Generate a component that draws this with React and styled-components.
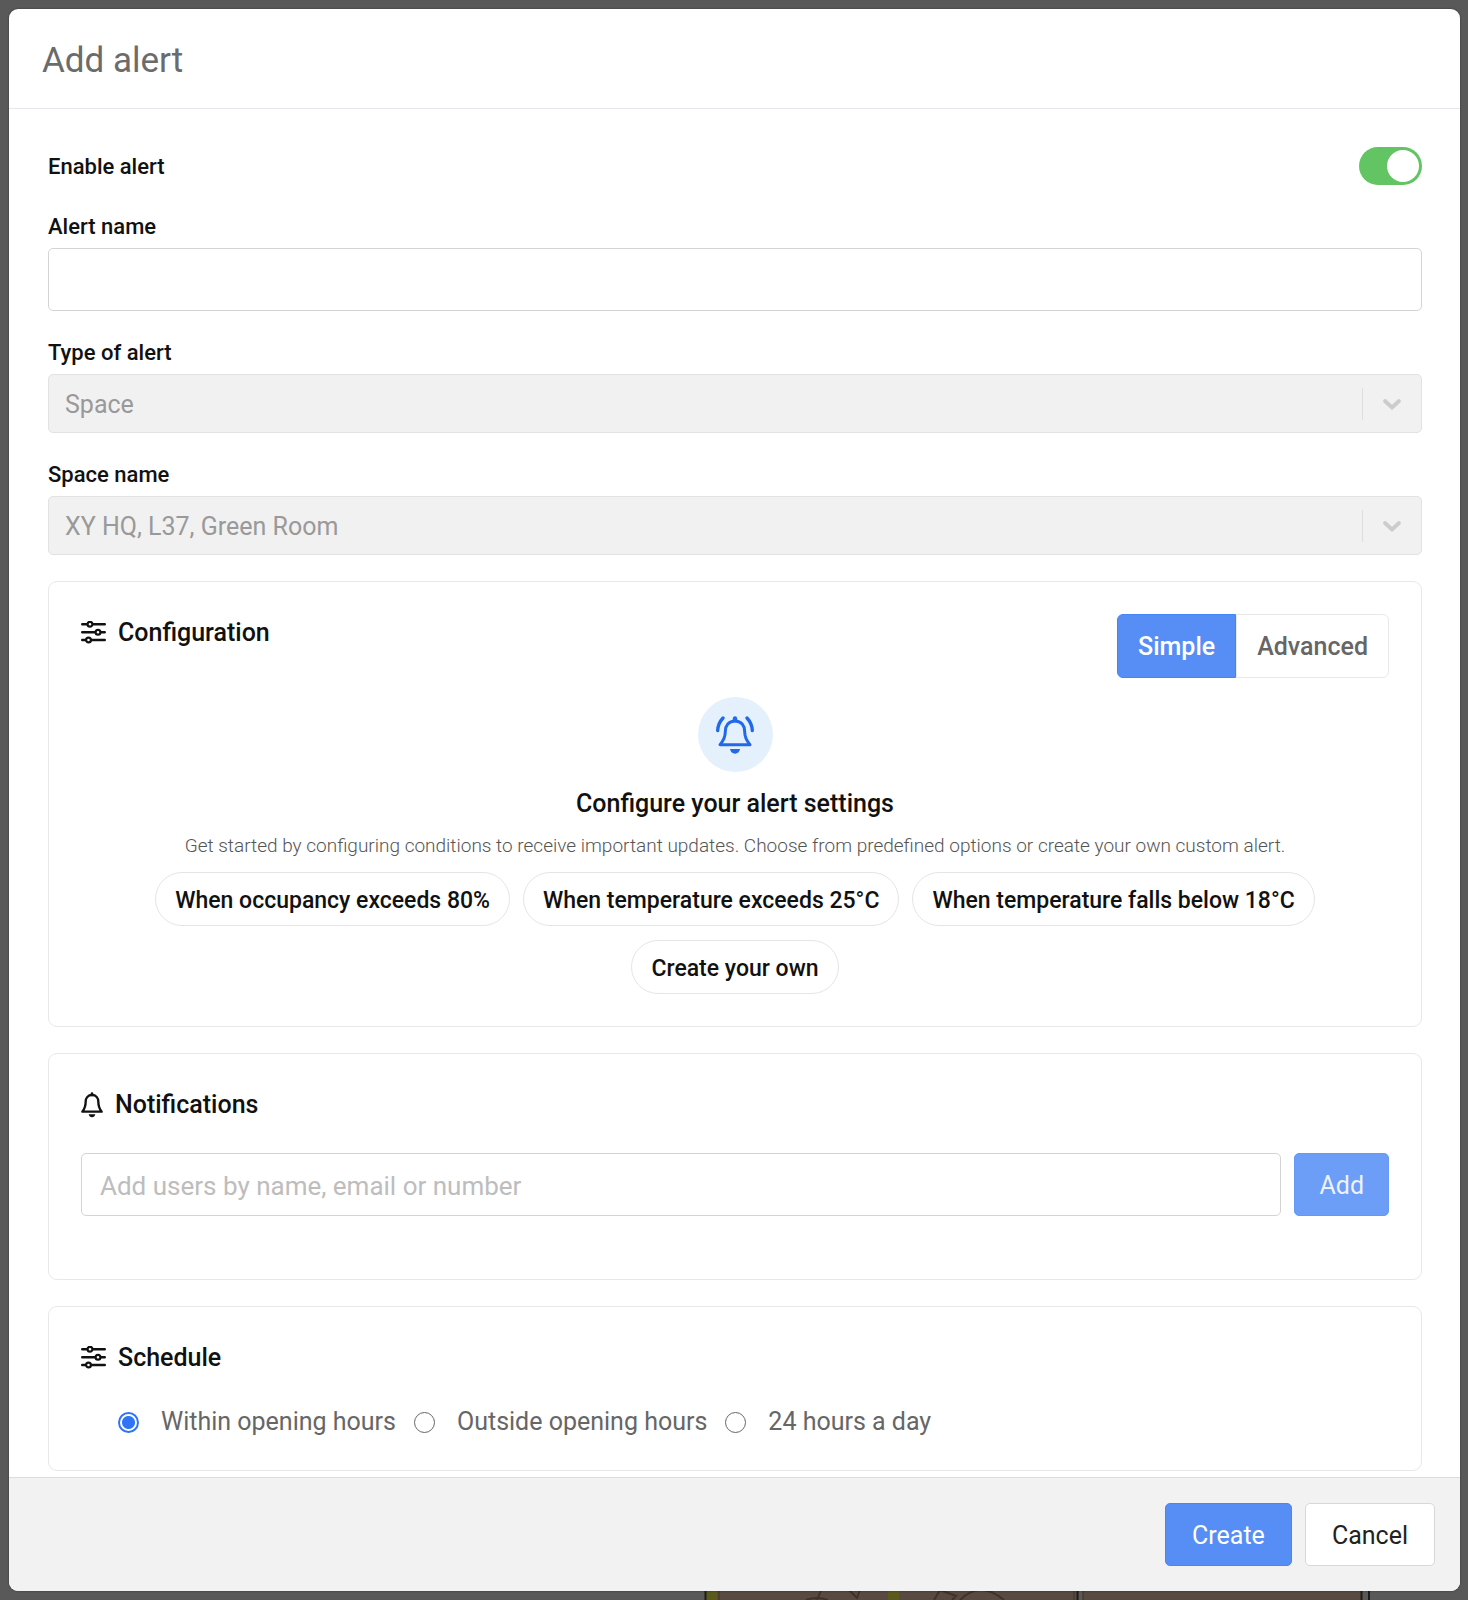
import React, { useState } from 'react';
import styled, { createGlobalStyle } from 'styled-components';

const GlobalStyle = createGlobalStyle`
  * {
    box-sizing: border-box;
  }

  body {
    margin: 0;
    background: #595959;
    font-family: Roboto, 'Liberation Sans', sans-serif;
    color: #111;
  }

  button,
  input,
  select {
    margin: 0;
    font-family: inherit;
  }
`;

const StyledBackdrop = styled.div`
  position: relative;
  display: flex;
  min-height: 100vh;
  padding: 9px 8px 9px 9px;
  background: #595959;
`;

const StyledFloorPlan = styled.svg`
  position: absolute;
  right: 96px;
  bottom: 0;
  width: 668px;
  height: 12px;
`;

const StyledDialog = styled.form`
  position: relative;
  display: flex;
  flex: 1;
  flex-direction: column;
  min-width: 0;
  overflow: hidden;
  border-radius: 9px;
  background: #fff;
  box-shadow: 0 0 2px rgba(0, 0, 0, 0.5);
`;

const StyledHeader = styled.header`
  display: flex;
  align-items: center;
  height: 100px;
  padding: 3px 33px 0;
  border-bottom: 1px solid #e4e7eb;

  h1 {
    margin: 0;
    font-size: 35px;
    font-weight: 400;
    color: #6b6b6b;
  }
`;

const StyledBody = styled.div`
  display: flex;
  flex-direction: column;
  gap: 26px;
  padding: 38px 38px 5px 39px;
`;

const StyledToggleRow = styled.div`
  display: flex;
  align-items: center;
  justify-content: space-between;
`;

const StyledField = styled.div`
  display: flex;
  flex-direction: column;
  gap: 6px;
`;

const StyledLabel = styled.label`
  font-size: 22px;
  font-weight: 500;
  line-height: 31px;
`;

const StyledToggle = styled.input`
  display: flex;
  width: 63px;
  height: 38px;
  padding: 3px;
  appearance: none;
  border-radius: 19px;
  background: #ccc;
  cursor: pointer;

  &:before {
    content: '';
    width: 32px;
    height: 32px;
    border-radius: 50%;
    background: #fff;
  }

  &:checked {
    justify-content: flex-end;
    background: #62c462;
  }
`;

const StyledInput = styled.input`
  width: 100%;
  min-width: 0;
  height: 63px;
  padding: 2px 18px 0;
  border: 1px solid #d4d4d4;
  border-radius: 5px;
  background: #fff;
  font-size: 26px;

  &::placeholder {
    color: #bdbdbd;
  }
`;

const StyledSelect = styled.div`
  display: flex;
  align-items: center;
  height: 59px;
  border: 1px solid #e2e2e2;
  border-radius: 5px;
  background: #f1f1f1;

  select {
    flex: 1;
    height: 100%;
    padding: 2px 16px 0;
    appearance: none;
    border: 0;
    background: transparent;
    color: #999;
    font-size: 25px;
    opacity: 1;
  }
`;

const StyledIndicator = styled.span`
  display: flex;
  align-items: center;
  justify-content: center;
  width: 59px;
  height: 32px;
  border-left: 1px solid #dedede;
`;

const StyledCard = styled.section`
  padding: 32px;
  padding-bottom: ${({ $roomy }) => ($roomy ? '63px' : '32px')};
  border: 1px solid #e7e9e9;
  border-radius: 9px;
`;

const StyledCardHeader = styled.div`
  display: flex;
  align-items: flex-start;
  justify-content: space-between;
`;

const StyledCardTitle = styled.h2`
  display: flex;
  align-items: center;
  gap: 12px;
  margin: 0;
  font-size: 25px;
  font-weight: 500;
  line-height: 38px;
`;

const StyledSegments = styled.div`
  display: flex;
`;

const StyledSegment = styled.button`
  height: 64px;
  padding: 0 20px;
  border: 1px solid ${({ $active }) => ($active ? '#4285f4' : '#e7e9e9')};
  border-radius: ${({ $side }) => ($side === 'left' ? '6px 0 0 6px' : '0 6px 6px 0')};
  background: ${({ $active }) => ($active ? '#568ef5' : '#fff')};
  color: ${({ $active }) => ($active ? '#fff' : '#666')};
  font-size: 25px;
  font-weight: 500;
  cursor: pointer;
`;

const StyledEmpty = styled.div`
  display: flex;
  flex-direction: column;
  align-items: center;
  margin-top: 19px;
  text-align: center;

  h3 {
    margin: 17px 0 14px;
    font-size: 25px;
    font-weight: 500;
    line-height: 30px;
  }

  p {
    margin: 0 0 13px;
    color: #555;
    font-size: 19px;
    font-weight: 300;
    line-height: 26px;
  }
`;

const StyledBadge = styled.div`
  display: flex;
  align-items: center;
  justify-content: center;
  width: 75px;
  height: 75px;
  border-radius: 50%;
  background: #e5f0fd;
`;

const StyledChips = styled.div`
  display: flex;
  flex-wrap: wrap;
  justify-content: center;
  gap: 14px 13px;
`;

const StyledChip = styled.button`
  height: 54px;
  padding: 2px 19px 0;
  border: 1px solid #e4e6e6;
  border-radius: 27px;
  background: #fff;
  color: #111;
  font-size: 23px;
  font-weight: 500;
  cursor: pointer;
`;

const StyledAddRow = styled.div`
  display: flex;
  gap: 13px;
  margin-top: 29px;
`;

const StyledButton = styled.button`
  flex: none;
  height: 63px;
  padding: 2px ${({ $tight }) => ($tight ? '24px' : '26px')} 0;
  border: 1px solid ${({ $primary }) => ($primary ? '#4a86f2' : '#d8d8d8')};
  border-radius: 5px;
  background: ${({ $primary }) => ($primary ? '#568ef5' : '#fff')};
  color: ${({ $primary }) => ($primary ? '#fff' : '#222')};
  font-size: 25px;
  cursor: pointer;

  &:disabled {
    border-color: #6699f5;
    background: #6c9df7;
    color: #edf3fe;
  }
`;

const StyledRadios = styled.div`
  display: flex;
  flex-wrap: wrap;
  gap: 18px;
  margin-top: 29px;
  padding-left: 37px;

  label {
    display: flex;
    align-items: center;
    gap: 22px;
    color: #666;
    font-size: 25px;
    line-height: 32px;
  }

  input {
    width: 21px;
    height: 21px;
    appearance: none;
    border: 1px solid #666;
    border-radius: 50%;
    background: #fff;
  }

  input:checked {
    border: 2px solid #2f73f6;
    background: radial-gradient(circle, #2f73f6 6px, #fff 7px);
  }
`;

const StyledFooter = styled.footer`
  display: flex;
  justify-content: flex-end;
  gap: 13px;
  margin-top: auto;
  padding: 25px;
  border-top: 1px solid #dcdcdc;
  background: #f2f2f2;
`;

const SlidersIcon = () => (
    <svg width="25" height="24" viewBox="0 0 25 24" fill="#fff" stroke="#111" strokeWidth="2.6" strokeLinecap="round" aria-hidden="true">
        <path d="M1.3 3.2H23.7M1.3 11.2H23.7M1.3 19H23.7" />
        <circle cx="9" cy="3.2" r="2.4" strokeWidth="2.2" />
        <circle cx="17" cy="11.2" r="2.4" strokeWidth="2.2" />
        <circle cx="7.5" cy="19" r="2.4" strokeWidth="2.2" />
    </svg>
);

const BellIcon = () => (
    <svg width="22" height="26" viewBox="0 0 66 78" fill="none" stroke="#111" strokeWidth="7" strokeLinejoin="round" strokeLinecap="round" aria-hidden="true">
        <path d="M33 9C21 9 14 18 14 29C14 42 11 50 4 59H62C55 50 52 42 52 29C52 18 45 9 33 9Z" />
        <path d="M33 5V9" strokeWidth="8" />
        <path d="M23 67H43Q41 76 33 76Q25 76 23 67Z" fill="#111" stroke="none" />
    </svg>
);

const RingingBellIcon = () => (
    <svg width="38" height="38" viewBox="0 0 114 114" fill="none" stroke="#2169e8" strokeWidth="9" strokeLinejoin="round" strokeLinecap="round" aria-hidden="true">
        <path d="M57 15C38 15 28 29 28 46C28 63 23 74 12 86H102C91 74 86 63 86 46C86 29 76 15 57 15Z" />
        <path d="M57 7V13" strokeWidth="13" />
        <path d="M21 6Q6 22 5 44M93 6Q108 22 109 44" strokeWidth="10" />
        <path d="M42 99H72Q69 113 57 113Q45 113 42 99Z" fill="#2169e8" stroke="none" />
    </svg>
);

const ChevronIcon = () => (
    <svg width="20" height="14" viewBox="0 0 20 14" fill="none" stroke="#ccc" strokeWidth="3.8" strokeLinecap="round" strokeLinejoin="round" aria-hidden="true">
        <path d="M3 4L10 10.5L17 4" />
    </svg>
);

const FloorPlan = () => (
    <StyledFloorPlan viewBox="0 0 668 12" aria-hidden="true">
        <rect x="1" width="374" height="12" fill="#584a41" />
        <rect x="1" width="12" height="12" fill="#5b5a1c" />
        <rect x="184" width="11" height="12" fill="#5b5a1c" />
        <rect x="379" width="278" height="12" fill="#584a41" />
        <path d="M1.5 0V12M373.5 0V12M657.5 0V12M665 0V12" stroke="#1c1c1c" strokeWidth="2" />
        <path d="M15 0V12M370 0V12M379 0V12" stroke="#40312a" fill="none" />
        <path d="M118 0L113 12M145 2L153 10L156 2M102 12Q113 8 124 12M230 12L236 2L252 8L248 12M256 12Q276 -8 300 12" stroke="#40312a" strokeWidth="2" fill="none" />
    </StyledFloorPlan>
);

const SelectField = ({ id, label, value }) => (
    <StyledField>
        <StyledLabel htmlFor={id}>{label}</StyledLabel>
        <StyledSelect>
            <select id={id} defaultValue={value} disabled>
                <option value={value}>{value}</option>
            </select>
            <StyledIndicator>
                <ChevronIcon />
            </StyledIndicator>
        </StyledSelect>
    </StyledField>
);

const App = () => {
    const [enabled, setEnabled] = useState(true);
    const [mode, setMode] = useState('Simple');
    const [schedule, setSchedule] = useState('Within opening hours');
    const [user, setUser] = useState('');

    const presets = ['When occupancy exceeds 80%', 'When temperature exceeds 25°C', 'When temperature falls below 18°C', 'Create your own'];
    const schedules = ['Within opening hours', 'Outside opening hours', '24 hours a day'];

    return (
        <StyledBackdrop>
            <GlobalStyle />
            <FloorPlan />
            <StyledDialog role="dialog" aria-labelledby="dialog-title" onSubmit={(e) => e.preventDefault()}>
                <StyledHeader>
                    <h1 id="dialog-title">Add alert</h1>
                </StyledHeader>

                <StyledBody>
                    <StyledToggleRow>
                        <StyledLabel htmlFor="enable">Enable alert</StyledLabel>
                        <StyledToggle id="enable" type="checkbox" checked={enabled} onChange={(e) => setEnabled(e.target.checked)} />
                    </StyledToggleRow>

                    <StyledField>
                        <StyledLabel htmlFor="name">Alert name</StyledLabel>
                        <StyledInput id="name" type="text" />
                    </StyledField>

                    <SelectField id="type" label="Type of alert" value="Space" />
                    <SelectField id="space" label="Space name" value="XY HQ, L37, Green Room" />

                    <StyledCard>
                        <StyledCardHeader>
                            <StyledCardTitle><SlidersIcon />Configuration</StyledCardTitle>
                            <StyledSegments>
                                <StyledSegment type="button" $side="left" $active={mode === 'Simple'} onClick={() => setMode('Simple')}>Simple</StyledSegment>
                                <StyledSegment type="button" $side="right" $active={mode === 'Advanced'} onClick={() => setMode('Advanced')}>Advanced</StyledSegment>
                            </StyledSegments>
                        </StyledCardHeader>
                        <StyledEmpty>
                            <StyledBadge><RingingBellIcon /></StyledBadge>
                            <h3>Configure your alert settings</h3>
                            <p>Get started by configuring conditions to receive important updates. Choose from predefined options or create your own custom alert.</p>
                            <StyledChips>
                                {presets.map((preset) => <StyledChip type="button" key={preset}>{preset}</StyledChip>)}
                            </StyledChips>
                        </StyledEmpty>
                    </StyledCard>

                    <StyledCard $roomy>
                        <StyledCardTitle><BellIcon />Notifications</StyledCardTitle>
                        <StyledAddRow>
                            <StyledInput
                                type="text"
                                aria-label="Add users"
                                placeholder="Add users by name, email or number"
                                value={user}
                                onChange={(e) => setUser(e.target.value)}
                            />
                            <StyledButton type="button" $primary $tight disabled={!user}>Add</StyledButton>
                        </StyledAddRow>
                    </StyledCard>

                    <StyledCard>
                        <StyledCardTitle><SlidersIcon />Schedule</StyledCardTitle>
                        <StyledRadios>
                            {schedules.map((item) => (
                                <label key={item}>
                                    <input type="radio" name="schedule" checked={schedule === item} onChange={() => setSchedule(item)} />
                                    {item}
                                </label>
                            ))}
                        </StyledRadios>
                    </StyledCard>
                </StyledBody>

                <StyledFooter>
                    <StyledButton type="submit" $primary>Create</StyledButton>
                    <StyledButton type="button">Cancel</StyledButton>
                </StyledFooter>
            </StyledDialog>
        </StyledBackdrop>
    );
};

export default App;
